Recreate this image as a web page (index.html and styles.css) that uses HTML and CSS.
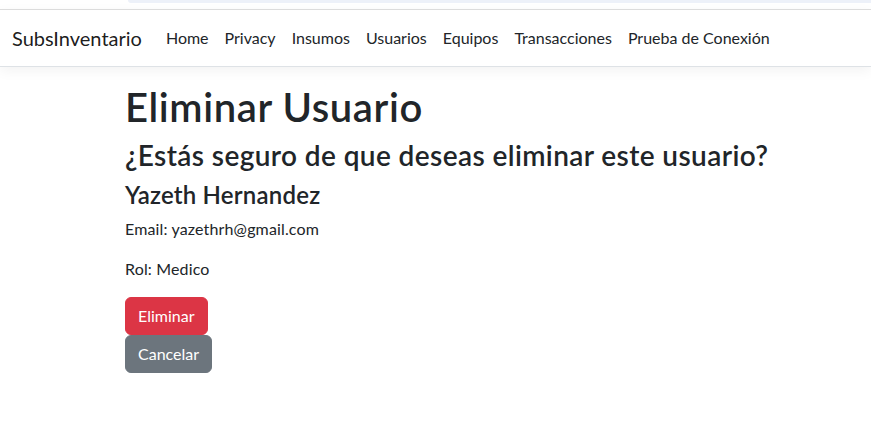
FILE: index.html
```html
<!DOCTYPE html>
<html lang="es">
<head>
<meta charset="utf-8">
<title>Eliminar Usuario - SubsInventario</title>
<link rel="stylesheet" href="styles.css">
</head>
<body>
<div class="topstrip"><div class="topstrip-bar"></div></div>
<header>
  <nav class="navbar">
    <a class="navbar-brand" href="#">SubsInventario</a>
    <ul class="navbar-nav">
      <li><a class="nav-link" href="#">Home</a></li>
      <li><a class="nav-link" href="#">Privacy</a></li>
      <li><a class="nav-link" href="#">Insumos</a></li>
      <li><a class="nav-link" href="#">Usuarios</a></li>
      <li><a class="nav-link" href="#">Equipos</a></li>
      <li><a class="nav-link" href="#">Transacciones</a></li>
      <li><a class="nav-link" href="#">Prueba de Conexión</a></li>
    </ul>
  </nav>
</header>
<main class="container">
  <h1 class="title">Eliminar Usuario</h1>
  <h3 class="question">¿Estás seguro de que deseas eliminar este usuario?</h3>
  <h4 class="user-name">Yazeth Hernandez</h4>
  <p class="info">Email: yazethrh@gmail.com</p>
  <p class="info">Rol: Medico</p>
  <div class="actions">
    <form class="delete-form">
      <button type="button" class="btn btn-danger">Eliminar</button>
    </form>
    <a href="#" class="btn btn-secondary">Cancelar</a>
  </div>
</main>
</body>
</html>
```
FILE: styles.css
```css
*, *::before, *::after { box-sizing: border-box; }

html, body {
  margin: 0;
  padding: 0;
  background: #ffffff;
}

body {
  font-family: "Lato", "Noto Sans", "Liberation Sans", sans-serif;
  font-size: 16px;
  line-height: 1.5;
  color: #212529;
}

.topstrip {
  height: 9px;
  background: #ffffff;
}

.topstrip-bar {
  margin-left: 128px;
  height: 3px;
  background: #edf1f9;
  border-bottom-left-radius: 8px;
}

.navbar {
  display: flex;
  align-items: center;
  padding: 8px 12px;
  background: #ffffff;
  border-top: 1px solid #dcdcdc;
  border-bottom: 1px solid #dee2e6;
  box-shadow: 0 4px 12px rgba(0, 0, 0, 0.05);
  margin-bottom: 16px;
}

.navbar-brand {
  font-size: 20px;
  line-height: 30px;
  padding: 5px 0;
  margin-right: 16px;
  color: rgba(0, 0, 0, 0.9);
  text-decoration: none;
}

.navbar-nav {
  display: flex;
  list-style: none;
  margin: 0;
  padding: 0;
}

.nav-link {
  display: block;
  padding: 8px;
  color: #212529;
  text-decoration: none;
  line-height: 24px;
}

.container {
  padding: 0 12px 0 125px;
}

.title,
.question,
.user-name {
  margin: 0 0 8px;
  font-weight: 600;
  line-height: 1.2;
  color: #212529;
}

.title { font-size: 40px; letter-spacing: 0.6px; }
.question { font-size: 28px; letter-spacing: 0.4px; white-space: nowrap; }
.user-name { font-size: 24px; letter-spacing: 0.2px; }

.info {
  margin: 0 0 16px;
  letter-spacing: 0.15px;
}

.actions {
  display: flex;
  flex-direction: column;
  align-items: flex-start;
}

.delete-form { margin: 0; }

.btn {
  display: inline-block;
  font-family: inherit;
  font-size: 16px;
  line-height: 24px;
  padding: 6px 12px;
  border: 1px solid transparent;
  border-radius: 6px;
  color: #ffffff;
  text-decoration: none;
  cursor: pointer;
}

.btn-danger {
  background: #dc3545;
  border-color: #dc3545;
}

.btn-secondary {
  background: #6c757d;
  border-color: #6c757d;
}
```
